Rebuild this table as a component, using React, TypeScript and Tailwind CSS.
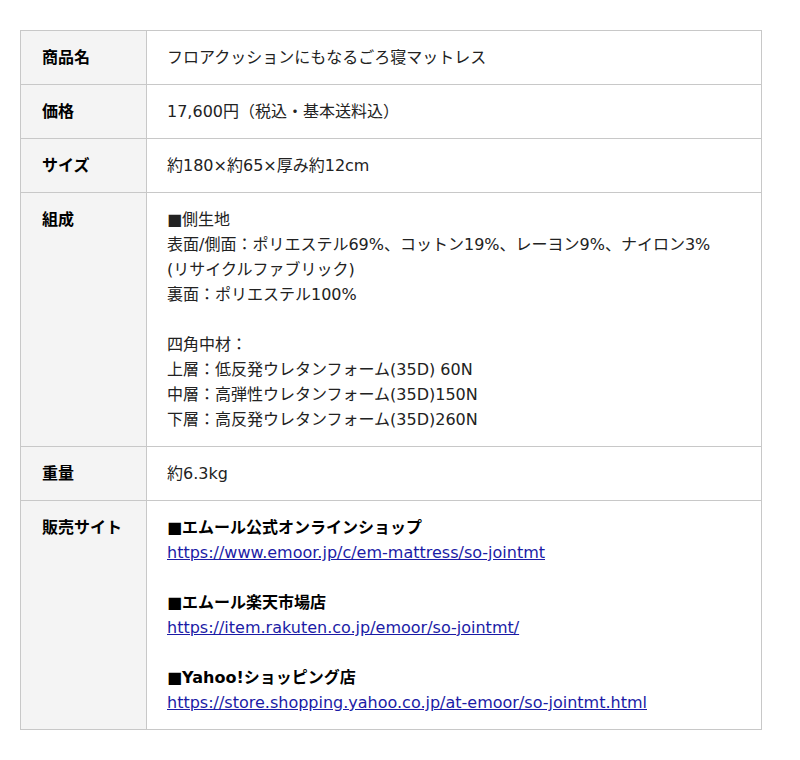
const Link = ({ href }: { href: string }) => (
  <a href={href} className="text-[#1b1ba6] underline">
    {href}
  </a>
);

export default function App() {
  const spec = [
    { label: "商品名", body: <p>フロアクッションにもなるごろ寝マットレス</p> },
    { label: "価格", body: <p>17,600円（税込・基本送料込）</p> },
    { label: "サイズ", body: <p>約180×約65×厚み約12cm</p> },
    {
      label: "組成",
      body: (
        <>
          <p>■側生地</p>
          <p>表面/側面：ポリエステル69%、コットン19%、レーヨン9%、ナイロン3%</p>
          <p>(リサイクルファブリック)</p>
          <p>裏面：ポリエステル100%</p>
          <p>&nbsp;</p>
          <p>四角中材：</p>
          <p>上層：低反発ウレタンフォーム(35D) 60N</p>
          <p>中層：高弾性ウレタンフォーム(35D)150N</p>
          <p>下層：高反発ウレタンフォーム(35D)260N</p>
        </>
      ),
    },
    { label: "重量", body: <p>約6.3kg</p> },
    {
      label: "販売サイト",
      body: (
        <>
          <p className="font-bold text-black">■エムール公式オンラインショップ</p>
          <p><Link href="https://www.emoor.jp/c/em-mattress/so-jointmt" /></p>
          <p>&nbsp;</p>
          <p className="font-bold text-black">■エムール楽天市場店</p>
          <p><Link href="https://item.rakuten.co.jp/emoor/so-jointmt/" /></p>
          <p>&nbsp;</p>
          <p className="font-bold text-black">■Yahoo!ショッピング店</p>
          <p><Link href="https://store.shopping.yahoo.co.jp/at-emoor/so-jointmt.html" /></p>
        </>
      ),
    },
  ];

  return (
    <div className="min-h-[760px] bg-white pt-[30px] pl-[20px] font-['DejaVu_Sans','Noto_Sans_CJK_JP',sans-serif] text-[16px] leading-[25px] text-[#222]">
      <table className="w-[742px] border-collapse border border-[#d0d0d0]">
        <tbody>
          {spec.map((r) => (
            <tr key={r.label}>
              <th className="w-[126px] border border-[#c8c8c8] bg-[#f4f4f4] px-[21px] py-[14px] text-left align-top font-bold text-black">
                {r.label}
              </th>
              <td className="border border-[#c8c8c8] px-[20px] py-[14px] align-top">{r.body}</td>
            </tr>
          ))}
        </tbody>
      </table>
    </div>
  );
}
